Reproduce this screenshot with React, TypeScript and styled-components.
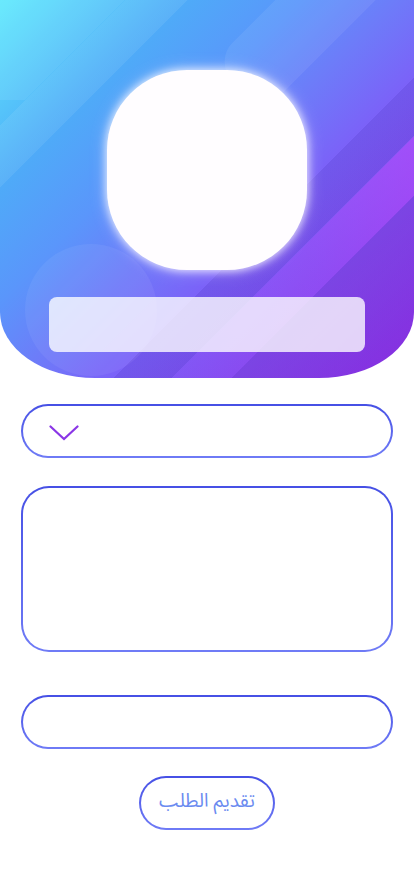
import React from "react";
import styled, { createGlobalStyle } from "styled-components";

const Global = createGlobalStyle`
  html, body { margin: 0; padding: 0; background: #ffffff; }
  body { font-family: "Noto Sans Arabic", "DejaVu Sans", "Noto Sans", sans-serif; }
  * { box-sizing: border-box; }
`;

const Page = styled.div`
  width: 414px;
  min-height: 896px;
  background: #ffffff;
  display: flex;
  flex-direction: column;
`;

const Header = styled.header`
  position: relative;
  overflow: hidden;
  height: 378px;
  padding-top: 70px;
  display: flex;
  flex-direction: column;
  align-items: center;
  gap: 27px;
  border-radius: 0 0 95px 95px / 0 0 66px 66px;
  background:
    linear-gradient(135deg,
      rgba(255,255,255,0) 0%,
      rgba(255,255,255,0) 15.8%,
      rgba(255,255,255,0.07) 15.8%,
      rgba(255,255,255,0.07) 23.7%,
      rgba(0,0,0,0) 23.7%,
      rgba(0,0,0,0) 62%,
      rgba(40,20,150,0.12) 62%,
      rgba(40,20,150,0.12) 69.4%,
      rgba(0,0,0,0) 69.4%,
      rgba(0,0,0,0) 77%,
      rgba(50,0,120,0.1) 77%,
      rgba(50,0,120,0.02) 100%),
    linear-gradient(135deg,
      #5ee9fd 0%,
      #4faaf8 24%,
      #5a96fb 38%,
      #6d7cf9 50%,
      #7b62f8 62%,
      #8548ee 80%,
      #8a2be2 100%);
`;

const CornerShape = styled.div`
  position: absolute;
  left: -100px;
  top: -100px;
  width: 250px;
  height: 200px;
  border-radius: 0 0 30px 0;
  background: rgba(255, 255, 255, 0.08);
  clip-path: polygon(0 0, 250px 0, 250px 75px, 125px 200px, 0 200px);
  pointer-events: none;
`;

const Ribbon = styled.div<{ $l: number; $t: number; $w: number; $h: number; $r: number; $bg: string }>`
  position: absolute;
  left: ${(p) => p.$l}px;
  top: ${(p) => p.$t}px;
  width: ${(p) => p.$w}px;
  height: ${(p) => p.$h}px;
  border-radius: ${(p) => p.$r}px;
  background: ${(p) => p.$bg};
  transform: rotate(-45deg);
  pointer-events: none;
`;

const Bubble = styled.div`
  position: absolute;
  left: 25px;
  top: 244px;
  width: 132px;
  height: 132px;
  border-radius: 50%;
  background: rgba(255, 255, 255, 0.06);
  pointer-events: none;
`;

const Avatar = styled.div`
  position: relative;
  z-index: 1;
  width: 200px;
  height: 200px;
  border-radius: 80px;
  background: #fffdff;
  box-shadow: 0 0 8px 1px rgba(255, 255, 255, 0.8), 0 0 18px rgba(225, 215, 255, 0.45);
`;

const NameBar = styled.div`
  position: relative;
  z-index: 1;
  width: 316px;
  height: 55px;
  border-radius: 8px;
  background: rgba(255, 255, 255, 0.78);
`;

const Form = styled.form`
  display: flex;
  flex-direction: column;
  align-items: center;
  padding: 26px 21px 0;
`;

const outline = `
  border: 2px solid transparent;
  background:
    linear-gradient(#ffffff, #ffffff) padding-box,
    linear-gradient(180deg, #4650e5, #6f7bf6) border-box;
`;

const Select = styled.div`
  ${outline}
  width: 372px;
  height: 54px;
  border-radius: 27px;
  display: flex;
  align-items: center;
  padding: 3px 0 0 26px;
`;

const TextArea = styled.div`
  ${outline}
  width: 372px;
  height: 166px;
  margin-top: 28px;
  border-radius: 28px;
`;

const Input = styled.div`
  ${outline}
  width: 372px;
  height: 54px;
  margin-top: 43px;
  border-radius: 27px;
`;

const Submit = styled.button`
  ${outline}
  margin-top: 27px;
  width: 136px;
  height: 54px;
  border-radius: 27px;
  font-family: "Noto Sans Arabic", "DejaVu Sans", "Noto Sans", sans-serif;
  font-size: 19px;
  color: #6b8bf0;
  direction: rtl;
  padding: 0 0 4px;
  cursor: pointer;
`;

const Chevron = () => (
  <svg width="30" height="16" viewBox="0 0 30 16" fill="none">
    <path d="M1.5 1.5 L15 14 L28.5 1.5" stroke="#8a36e6" strokeWidth="2.2" strokeLinecap="round" strokeLinejoin="miter" />
  </svg>
);

export default function App() {
  return (
    <Page>
      <Global />
      <Header>
        <CornerShape />
        <Ribbon $l={195} $t={-55} $w={300} $h={71} $r={26} $bg="rgba(255,255,255,0.07)" />
        <Ribbon
          $l={130}
          $t={229}
          $w={400}
          $h={42}
          $r={0}
          $bg="linear-gradient(90deg, rgba(190,70,255,0.04) 0%, rgba(195,70,255,0.2) 45%, rgba(200,70,255,0.5) 90%)"
        />
        <Bubble />
        <Avatar />
        <NameBar />
      </Header>
      <Form onSubmit={(e) => e.preventDefault()}>
        <Select>
          <Chevron />
        </Select>
        <TextArea />
        <Input />
        <Submit type="submit">تقديم الطلب</Submit>
      </Form>
    </Page>
  );
}
